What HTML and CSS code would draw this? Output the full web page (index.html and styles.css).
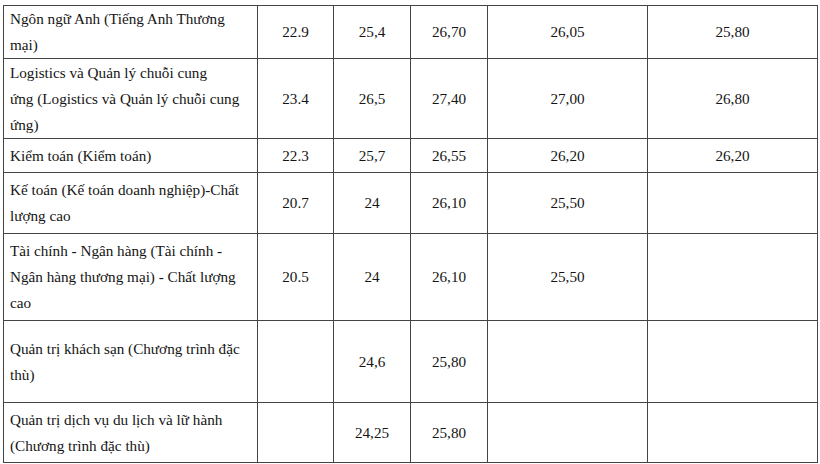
FILE: index.html
```html
<!DOCTYPE html>
<html lang="vi">
<head>
<meta charset="utf-8">
<title>Điểm chuẩn</title>
<link rel="stylesheet" href="styles.css">
</head>
<body>
<table class="scores">
  <colgroup>
    <col class="c-name">
    <col class="c-a">
    <col class="c-b">
    <col class="c-c">
    <col class="c-d">
    <col class="c-e">
  </colgroup>
  <tr class="r1">
    <td class="name">Ngôn ngữ Anh (Tiếng Anh Thương<br>mại)</td>
    <td>22.9</td><td>25,4</td><td>26,70</td><td>26,05</td><td>25,80</td>
  </tr>
  <tr class="r2">
    <td class="name">Logistics và Quản lý chuỗi cung<br>ứng (Logistics và Quản lý chuỗi cung<br>ứng)</td>
    <td>23.4</td><td>26,5</td><td>27,40</td><td>27,00</td><td>26,80</td>
  </tr>
  <tr class="r3">
    <td class="name">Kiểm toán (Kiểm toán)</td>
    <td>22.3</td><td>25,7</td><td>26,55</td><td>26,20</td><td>26,20</td>
  </tr>
  <tr class="r4">
    <td class="name">Kế toán (Kế toán doanh nghiệp)-Chất<br>lượng cao</td>
    <td>20.7</td><td>24</td><td>26,10</td><td>25,50</td><td></td>
  </tr>
  <tr class="r5">
    <td class="name">Tài chính - Ngân hàng (Tài chính -<br>Ngân hàng thương mại) - Chất lượng<br>cao</td>
    <td>20.5</td><td>24</td><td>26,10</td><td>25,50</td><td></td>
  </tr>
  <tr class="r6">
    <td class="name">Quản trị khách sạn (Chương trình đặc<br>thù)</td>
    <td></td><td>24,6</td><td>25,80</td><td></td><td></td>
  </tr>
  <tr class="r7">
    <td class="name">Quản trị dịch vụ du lịch và lữ hành<br>(Chương trình đặc thù)</td>
    <td></td><td>24,25</td><td>25,80</td><td></td><td></td>
  </tr>
</table>
</body>
</html>
```
FILE: styles.css
```css
html, body {
  margin: 0;
  padding: 0;
  background: #ffffff;
}

body {
  font-family: "Liberation Serif", "Times New Roman", serif;
  font-size: 15.2px;
  color: #151515;
}

.scores {
  border-collapse: collapse;
  table-layout: fixed;
  width: 814px;
  margin: 5px 0 0 3px;
}

.c-name { width: 254px; }
.c-a { width: 76px; }
.c-b { width: 77px; }
.c-c { width: 77px; }
.c-d { width: 160px; }
.c-e { width: 170px; }

.scores td {
  border: 1px solid #444444;
  padding: 0;
  text-align: center;
  vertical-align: middle;
  line-height: 26px;
  white-space: nowrap;
}

.scores td.name {
  text-align: left;
  padding-left: 6px;
}

.r1 { height: 52px; }
.r2 { height: 80px; }
.r3 { height: 34px; }
.r4 { height: 61px; }
.r5 { height: 87px; }
.r6 { height: 82px; }
.r7 { height: 60px; }
```
